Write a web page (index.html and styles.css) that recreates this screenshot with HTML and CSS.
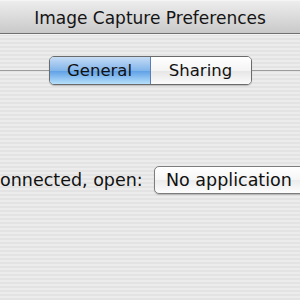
FILE: index.html
```html
<!DOCTYPE html>
<html lang="en">

<head>
    <meta charset="UTF-8">
    <title>Image Capture Preferences</title>
    <link rel="stylesheet" href="styles.css">
</head>

<body>
    <div class="window">
        <div class="titlebar">Image Capture Preferences</div>

        <div class="tabs-row">
            <div class="tab-line"></div>
            <div class="tabs">
                <div class="tab tab-selected">General</div>
                <div class="tab">Sharing</div>
            </div>
            <div class="tab-line"></div>
        </div>

        <div class="form-row">
            <span class="form-label">onnected, open:</span>
            <div class="popup">No application</div>
        </div>
    </div>
</body>

</html>
```

FILE: styles.css
```css
body {
    margin: 0;
    padding: 0;
    font-family: "DejaVu Sans", sans-serif;
    overflow: hidden;
}

.window {
    width: 300px;
    height: 300px;
    overflow: hidden;
    background: repeating-linear-gradient(to bottom, #ececec 0, #ececec 2px, #e3e3e3 2px, #e3e3e3 4px);
}

.titlebar {
    height: 32px;
    line-height: 35px;
    text-align: center;
    font-size: 17px;
    color: #141414;
    background: linear-gradient(to bottom, #ededed, #c9c9c9);
    border-top: 1px solid #f5f5f5;
    border-bottom: 1px solid #6f6f6f;
    box-shadow: 0 1px 0 #f4f4f4;
    white-space: nowrap;
}

.tabs-row {
    display: flex;
    align-items: center;
    margin-top: 22px;
}

.tab-line {
    flex: 1;
    height: 1px;
    background-color: #9c9c9c;
}

.tabs {
    display: flex;
    border: 1px solid #6b6b6b;
    border-radius: 5px;
    overflow: hidden;
    box-shadow: 0 1px 1px rgba(0, 0, 0, 0.2);
}

.tab {
    width: 100px;
    height: 27px;
    line-height: 28px;
    text-align: center;
    font-size: 16.5px;
    color: #111111;
    background: linear-gradient(to bottom, #ffffff, #f4f4f4 50%, #e6e6e6 51%, #fbfbfb);
}

.tab-selected {
    border-right: 1px solid #5a7fb0;
    background: linear-gradient(to bottom, #c6dcf5, #82b5ea 50%, #5d9fe6 51%, #b7e0fb);
}

.form-row {
    display: flex;
    align-items: center;
    margin-top: 81px;
}

.form-label {
    flex-shrink: 0;
    width: 154px;
    font-size: 17.5px;
    color: #111111;
    white-space: nowrap;
}

.popup {
    flex-shrink: 0;
    width: 170px;
    height: 26px;
    line-height: 26px;
    padding-left: 11px;
    font-size: 17.5px;
    color: #111111;
    border: 1px solid #7d7d7d;
    border-radius: 5px;
    background: linear-gradient(to bottom, #ffffff, #f6f6f6 50%, #ebebeb 51%, #fdfdfd);
    box-shadow: 0 1px 1px rgba(0, 0, 0, 0.2);
    white-space: nowrap;
}
```
